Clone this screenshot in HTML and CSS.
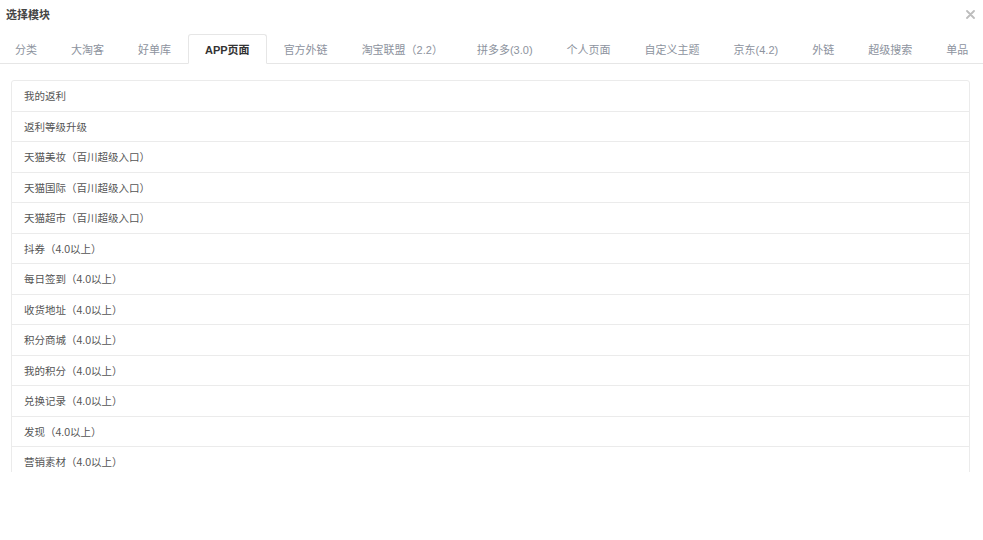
FILE: index.html
```html
<!DOCTYPE html>
<html lang="zh-CN">
<head>
<meta charset="utf-8">
<title>选择模块</title>
<link rel="stylesheet" href="styles.css">
</head>
<body>
<div class="modal">
  <div class="modal-header">
    <h4 class="modal-title">选择模块</h4>
    <button class="close" type="button" aria-label="关闭">
      <svg width="9" height="9" viewBox="0 0 9 9"><path d="M1 1L8 8M8 1L1 8" stroke="#bdbdbd" stroke-width="1.8" stroke-linecap="round"/></svg>
    </button>
  </div>
  <ul class="tabs">
    <li class="tab">分类</li>
    <li class="tab">大淘客</li>
    <li class="tab">好单库</li>
    <li class="tab active">APP页面</li>
    <li class="tab">官方外链</li>
    <li class="tab">淘宝联盟（2.2）</li>
    <li class="tab">拼多多(3.0)</li>
    <li class="tab">个人页面</li>
    <li class="tab">自定义主题</li>
    <li class="tab">京东(4.2)</li>
    <li class="tab">外链</li>
    <li class="tab">超级搜索</li>
    <li class="tab">单品</li>
  </ul>
  <div class="tab-body">
    <div class="scroll">
      <ul class="list">
        <li class="item">我的返利</li>
        <li class="item">返利等级升级</li>
        <li class="item">天猫美妆（百川超级入口）</li>
        <li class="item">天猫国际（百川超级入口）</li>
        <li class="item">天猫超市（百川超级入口）</li>
        <li class="item">抖券（4.0以上）</li>
        <li class="item">每日签到（4.0以上）</li>
        <li class="item">收货地址（4.0以上）</li>
        <li class="item">积分商城（4.0以上）</li>
        <li class="item">我的积分（4.0以上）</li>
        <li class="item">兑换记录（4.0以上）</li>
        <li class="item">发现（4.0以上）</li>
        <li class="item">营销素材（4.0以上）</li>
      </ul>
    </div>
  </div>
</div>
</body>
</html>
```

FILE: styles.css
```css
html, body {
  margin: 0;
  padding: 0;
  background: #fff;
}

body {
  font-family: "Liberation Sans", "Noto Sans CJK SC", sans-serif;
  color: #555;
  overflow: hidden;
}

ul {
  list-style: none;
  margin: 0;
  padding: 0;
}

.modal {
  display: flex;
  flex-direction: column;
  width: 983px;
}

.modal-header {
  display: flex;
  align-items: center;
  justify-content: space-between;
  height: 28px;
  padding: 0 8px 0 6px;
  margin-bottom: 6px;
}

.modal-title {
  margin: 0;
  font-size: 11px;
  font-weight: bold;
  color: #444;
}

.close {
  display: flex;
  padding: 0;
  border: 0;
  background: none;
}

.tabs {
  display: flex;
  height: 29px;
  border-bottom: 1px solid #e6e6e6;
  white-space: nowrap;
}

.tab {
  display: flex;
  align-items: center;
  flex: none;
  padding: 0 16px;
  margin-bottom: -1px;
  font-size: 11px;
  color: #8d939e;
  border: 1px solid transparent;
  border-radius: 3px 3px 0 0;
}

.tab:first-child {
  margin-left: -2px;
}

.tab.active {
  color: #333;
  font-weight: bold;
  background: #fff;
  border-color: #e6e6e6 #e6e6e6 #fff;
}

.tab-body {
  padding: 16px 13px 0 11px;
}

.scroll {
  height: 392px;
  overflow: hidden;
}

.list {
  border: 1px solid #ebebeb;
  border-radius: 3px;
}

.item {
  display: flex;
  align-items: center;
  height: 29.5px;
  padding: 0 12px;
  font-size: 10.5px;
  color: #555;
  border-top: 1px solid #ebebeb;
}

.item:first-child {
  border-top: 0;
}
```
